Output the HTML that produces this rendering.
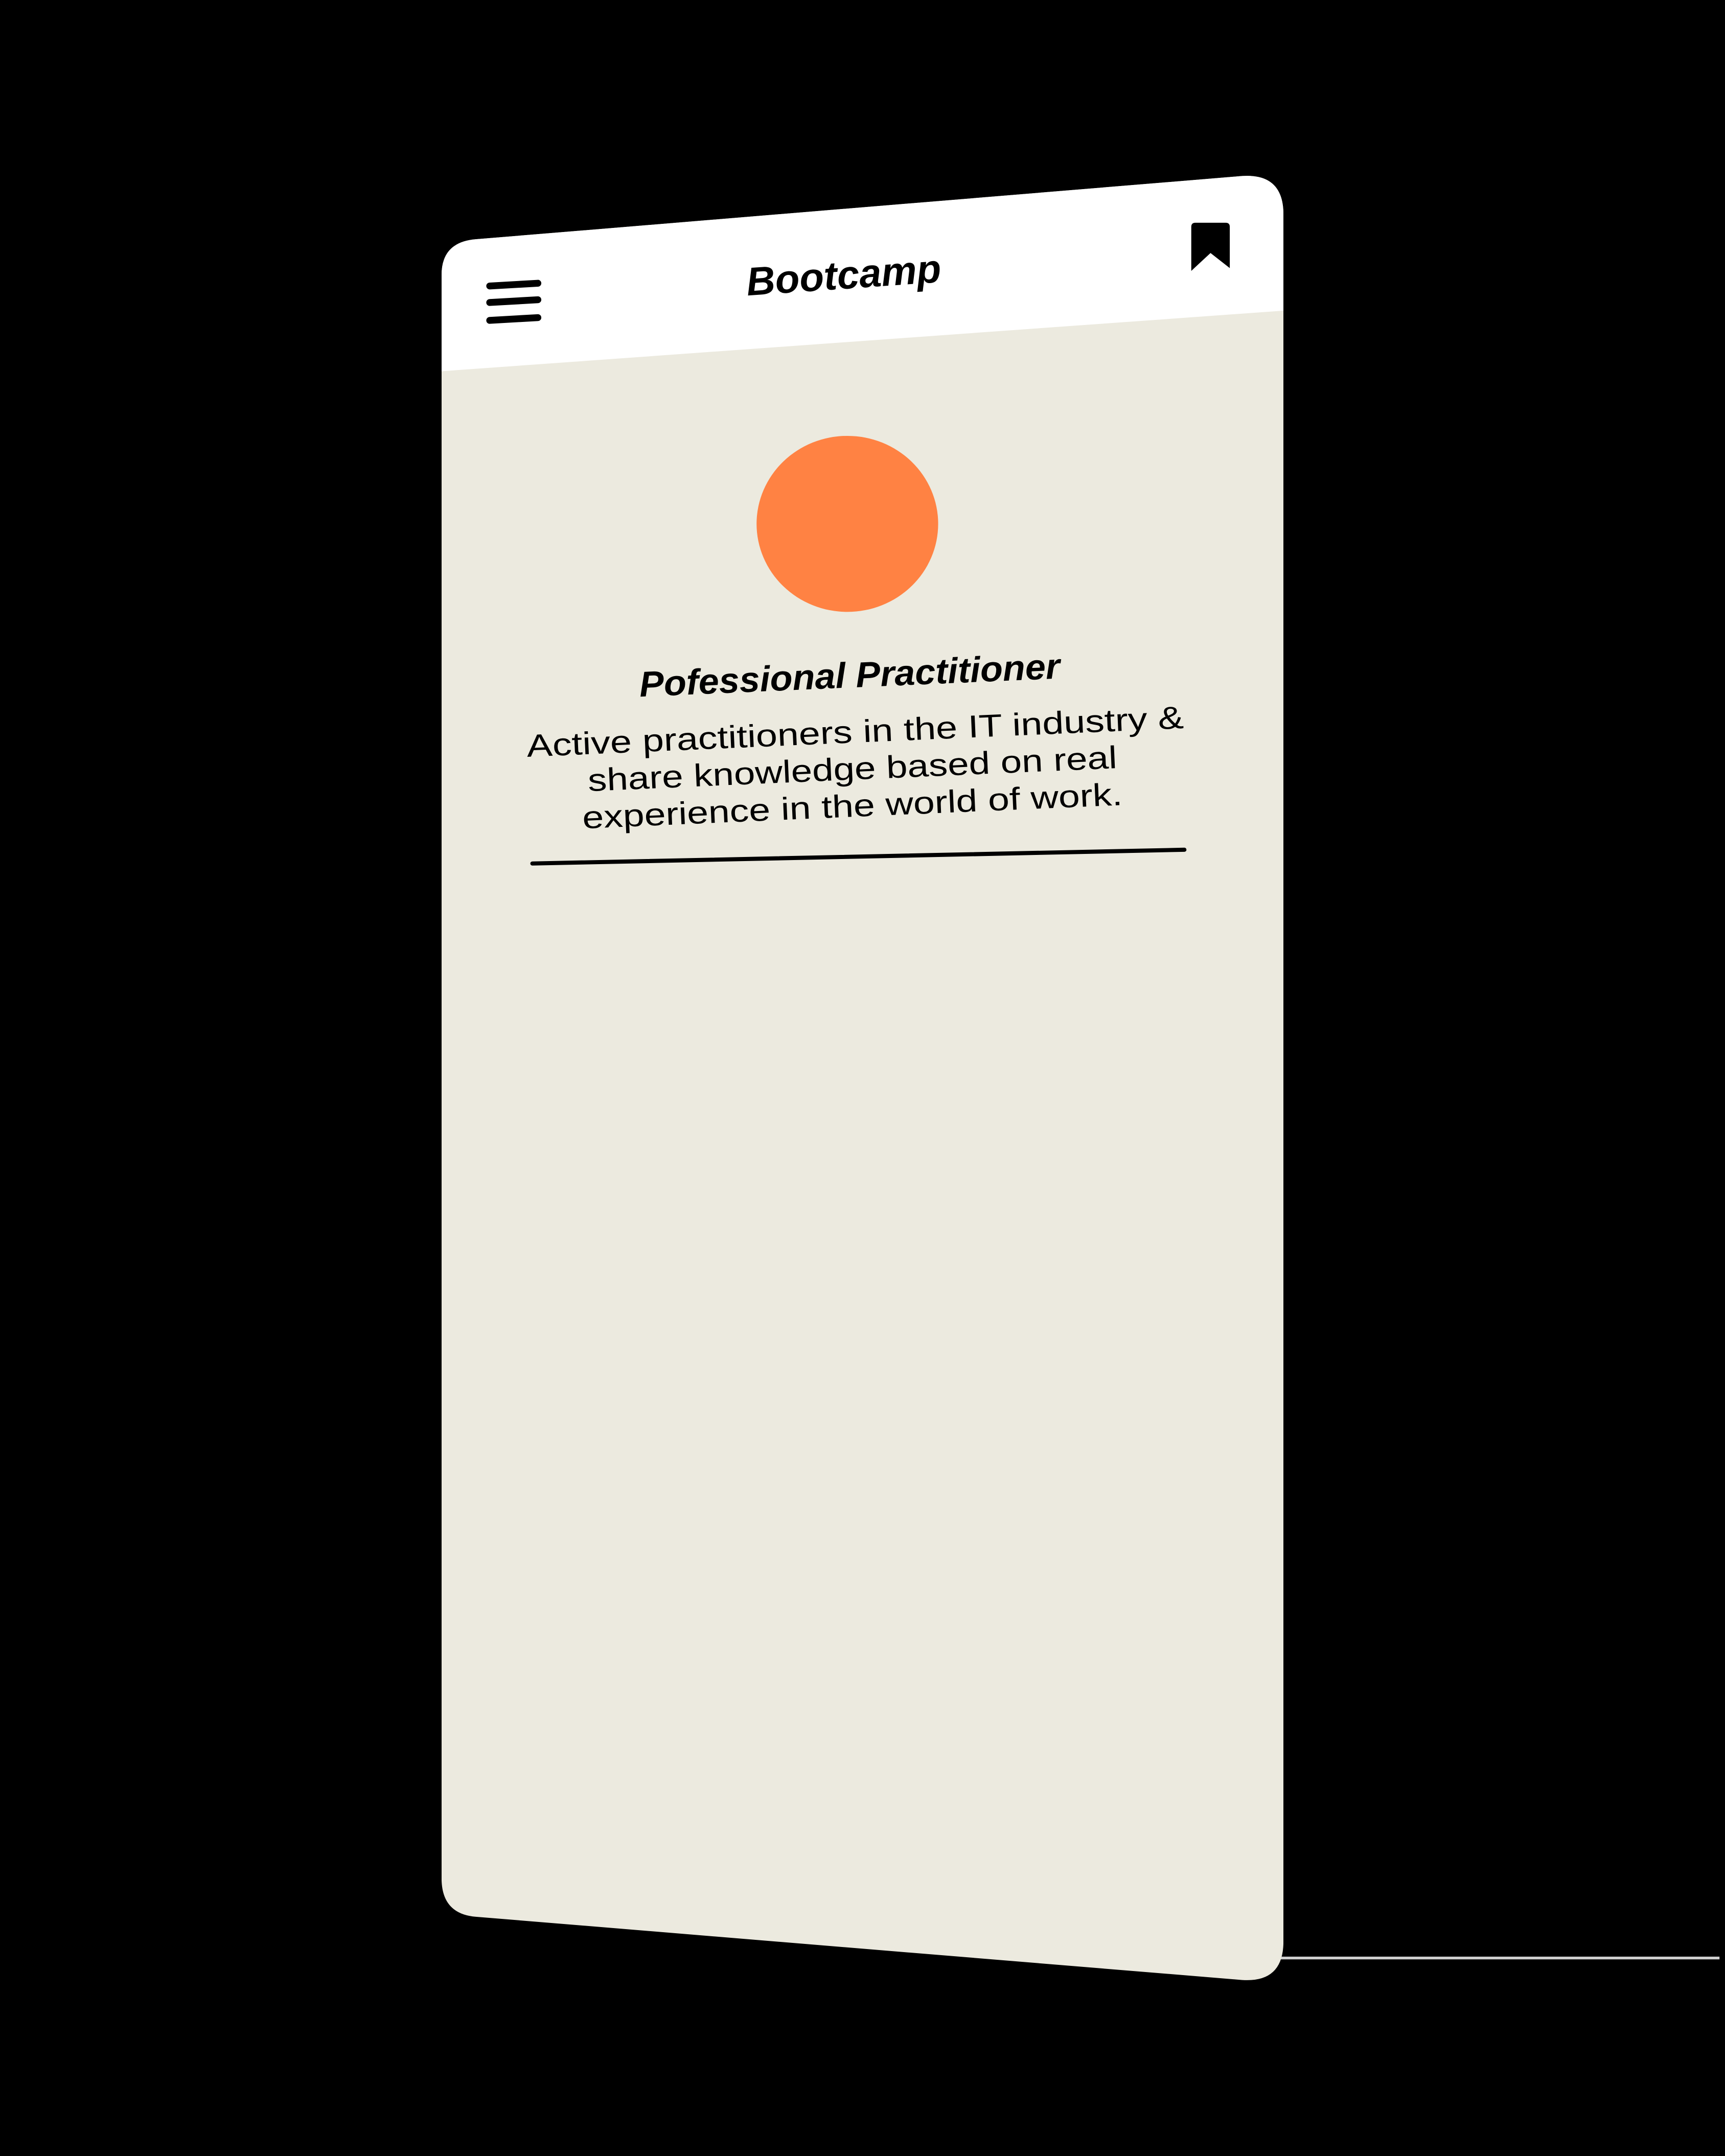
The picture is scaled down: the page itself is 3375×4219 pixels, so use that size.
<!DOCTYPE html>
<html><head><meta charset="utf-8"><style>
html,body{margin:0;padding:0;background:#000;width:3375px;height:4219px;overflow:hidden}
svg{display:block}
</style></head><body>
<svg width="3375" height="4219" viewBox="0 0 1254 1568" preserveAspectRatio="none" xmlns="http://www.w3.org/2000/svg">
<rect width="1254" height="1568" fill="#000"/>
<line x1="925" y1="1424" x2="1250" y2="1424" stroke="#cfcfcf" stroke-width="2"/>
<defs><clipPath id="ph"><path d="M321,200 Q321,176 346,174 L903,128 Q933,126 933,156 L933,1412 Q933,1442 903,1440 L346,1394 Q321,1392 321,1366 Z"/></clipPath></defs>
<g clip-path="url(#ph)">
<rect x="300" y="100" width="660" height="1360" fill="#ECEADF"/>
<polygon points="300,100 960,100 960,224 321,270 300,272" fill="#ffffff"/>
</g>
<g stroke="#000" stroke-width="5" stroke-linecap="round">
<line x1="356" y1="208" x2="391" y2="206"/>
<line x1="356" y1="220" x2="391" y2="218"/>
<line x1="356" y1="233" x2="391" y2="231"/>
</g>
<path d="M866,165 Q866,162 869,162 L891,162 Q894,162 894,165 L894,195 L880,184 L866,197 Z" fill="#000"/>
<text x="614" y="210" text-anchor="middle" font-family="Liberation Sans, sans-serif" font-weight="bold" font-style="italic" font-size="29" fill="#000" transform="rotate(-4 614 210)">Bootcamp</text>
<ellipse cx="616" cy="381" rx="66" ry="64" fill="#FF8243"/>
<text x="618" y="500" text-anchor="middle" font-family="Liberation Sans, sans-serif" font-weight="bold" font-style="italic" font-size="26" textLength="306" lengthAdjust="spacingAndGlyphs" fill="#000" transform="rotate(-2.5 618 500)">Pofessional Practitioner</text>
<g font-family="Liberation Sans, sans-serif" font-size="23" fill="#000" text-anchor="middle">
<text x="622" y="540" textLength="478" lengthAdjust="spacingAndGlyphs" transform="rotate(-2.5 622 540)">Active practitioners in the IT industry &amp;</text>
<text x="620" y="567" textLength="385" lengthAdjust="spacingAndGlyphs" transform="rotate(-2.5 620 567)">share knowledge based on real</text>
<text x="620" y="594" textLength="393" lengthAdjust="spacingAndGlyphs" transform="rotate(-2.5 620 594)">experience in the world of work.</text>
</g>
<line x1="387" y1="628" x2="861" y2="618" stroke="#000" stroke-width="3" stroke-linecap="round"/>
</svg>
</body></html>
